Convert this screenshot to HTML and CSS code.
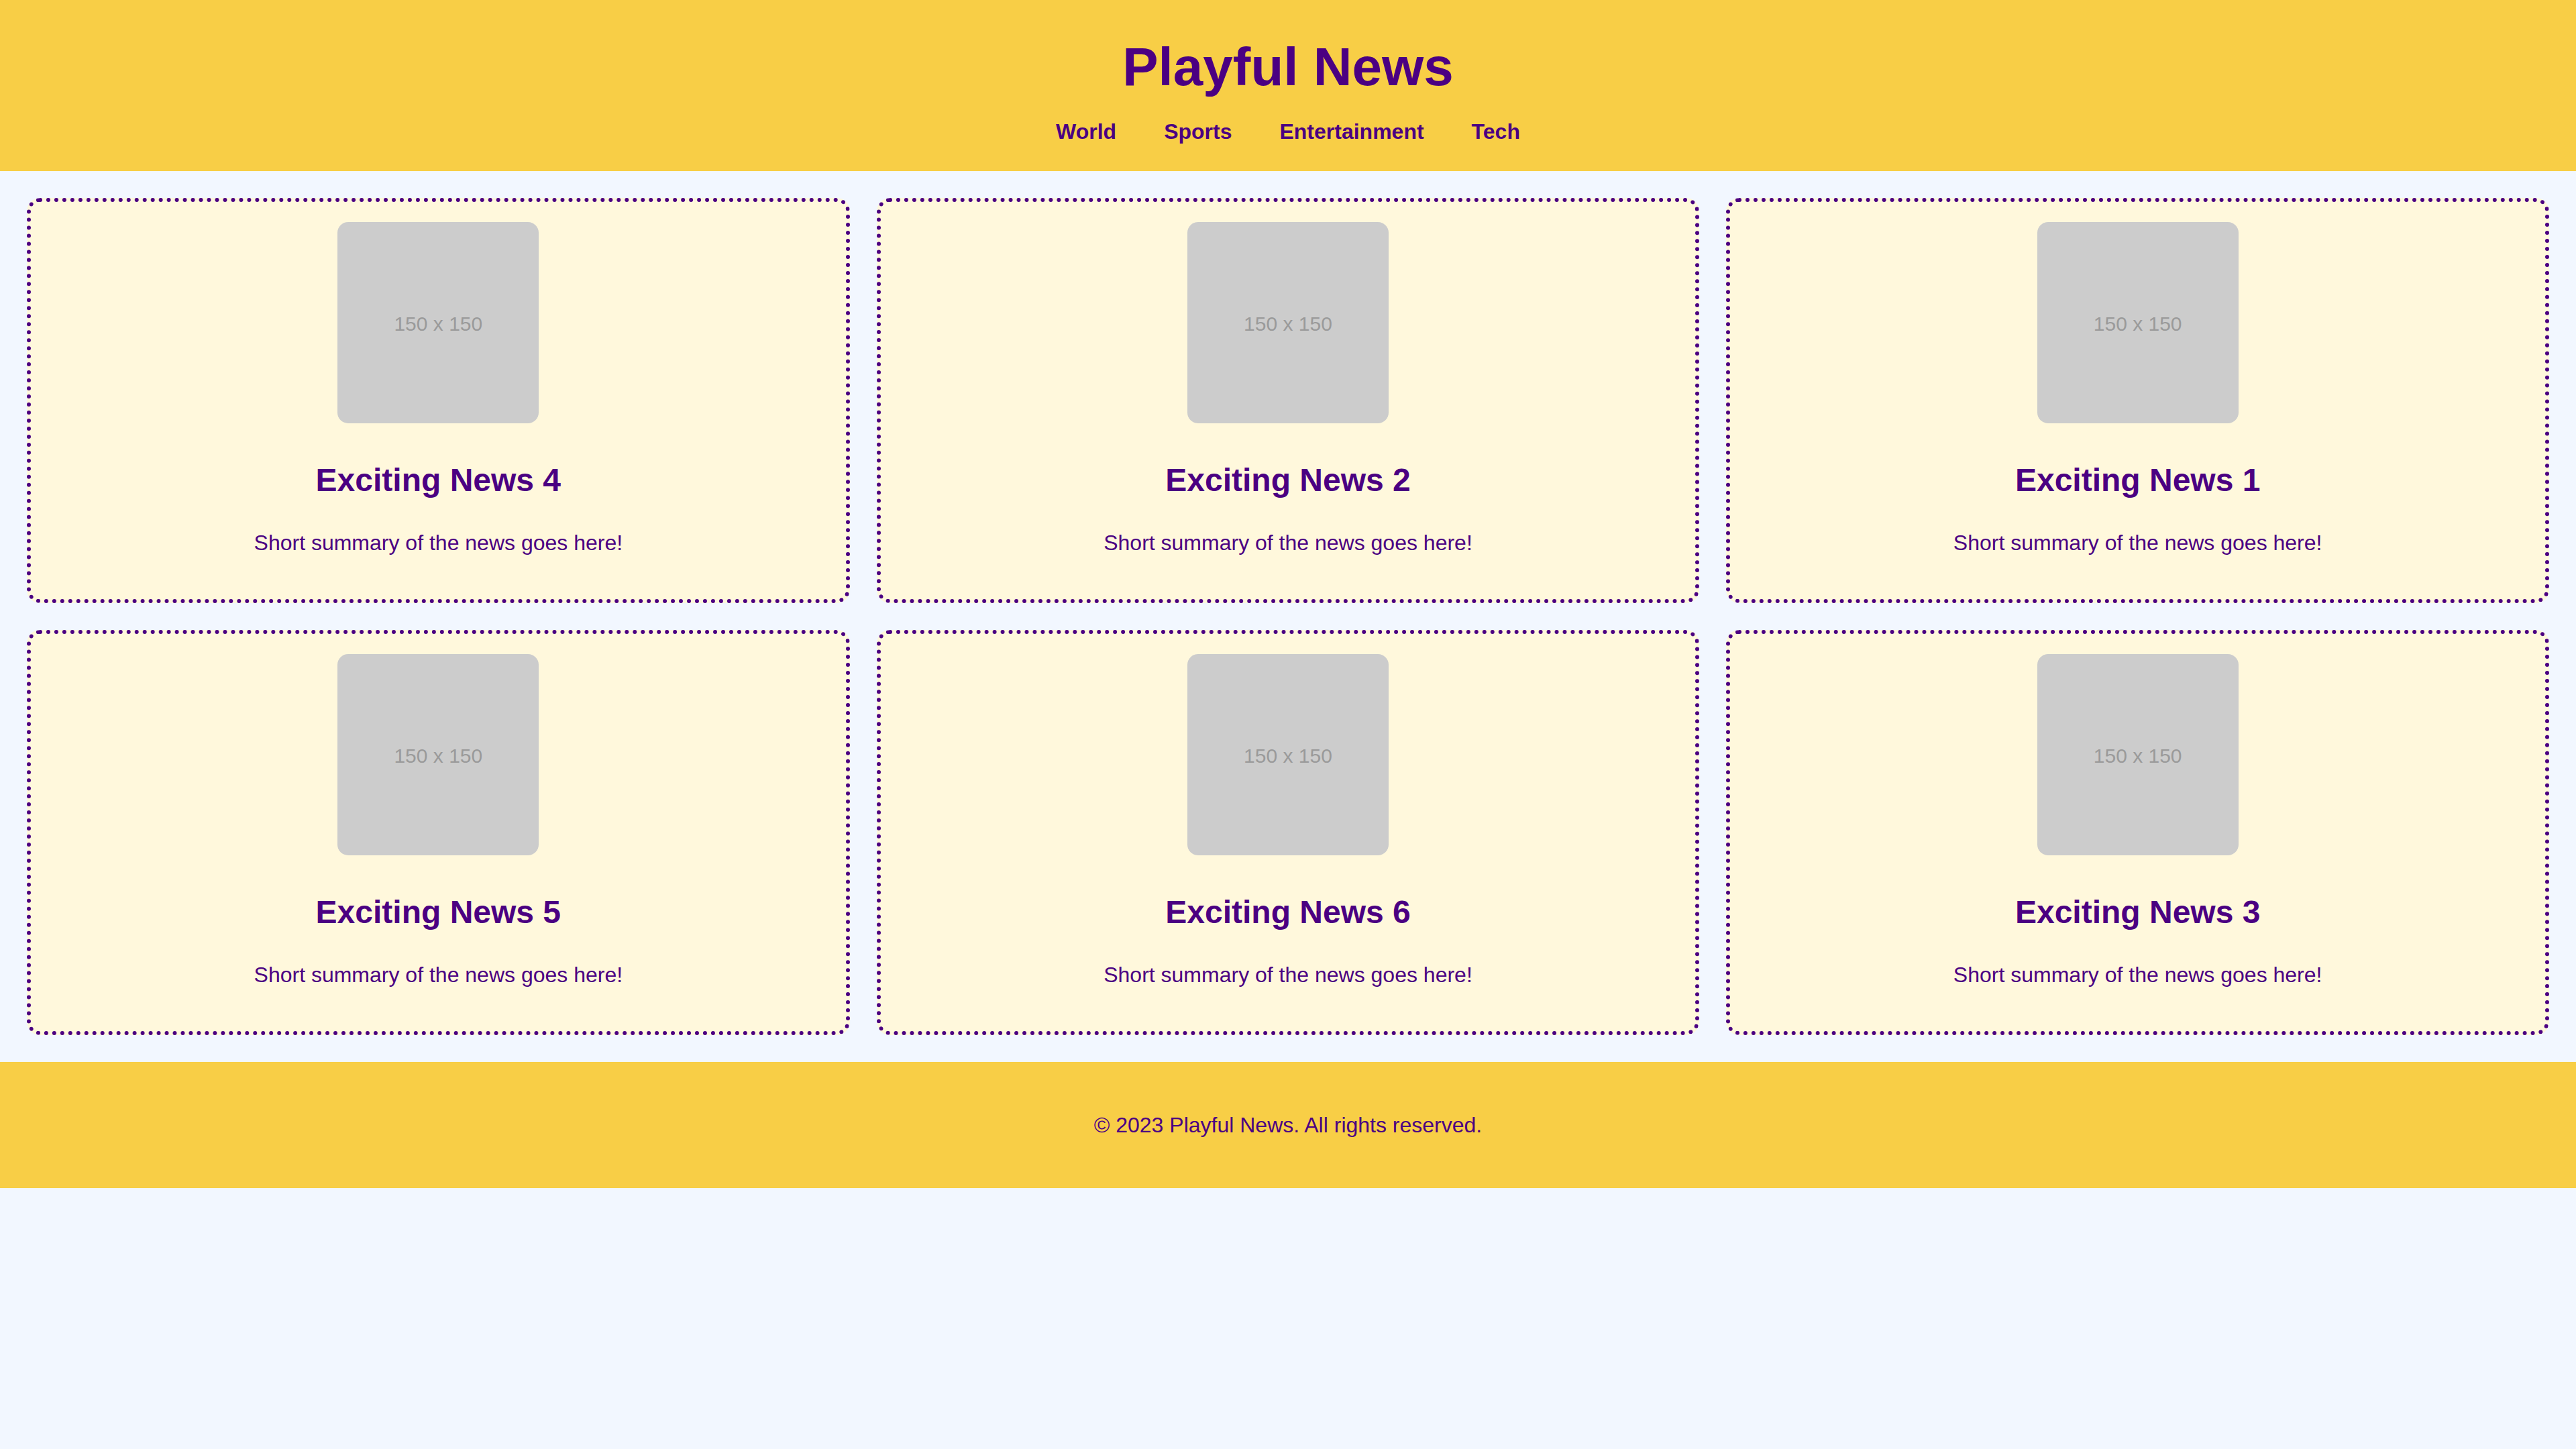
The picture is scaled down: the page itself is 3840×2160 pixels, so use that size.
FILE: index.html
```html
<!DOCTYPE html>
<html lang="en">
<head>
<meta charset="utf-8">
<title>Playful News</title>
<link rel="stylesheet" href="styles.css">
</head>
<body>
<header class="site-header">
  <h1 class="site-title">Playful News</h1>
  <nav class="site-nav">
    <a href="#">World</a>
    <a href="#">Sports</a>
    <a href="#">Entertainment</a>
    <a href="#">Tech</a>
  </nav>
</header>
<main class="news-grid">
  <article class="card">
    <div class="thumb">150 x 150</div>
    <h2 class="card-title">Exciting News 4</h2>
    <p class="card-text">Short summary of the news goes here!</p>
  </article>
  <article class="card">
    <div class="thumb">150 x 150</div>
    <h2 class="card-title">Exciting News 2</h2>
    <p class="card-text">Short summary of the news goes here!</p>
  </article>
  <article class="card">
    <div class="thumb">150 x 150</div>
    <h2 class="card-title">Exciting News 1</h2>
    <p class="card-text">Short summary of the news goes here!</p>
  </article>
  <article class="card">
    <div class="thumb">150 x 150</div>
    <h2 class="card-title">Exciting News 5</h2>
    <p class="card-text">Short summary of the news goes here!</p>
  </article>
  <article class="card">
    <div class="thumb">150 x 150</div>
    <h2 class="card-title">Exciting News 6</h2>
    <p class="card-text">Short summary of the news goes here!</p>
  </article>
  <article class="card">
    <div class="thumb">150 x 150</div>
    <h2 class="card-title">Exciting News 3</h2>
    <p class="card-text">Short summary of the news goes here!</p>
  </article>
</main>
<footer class="site-footer">
  <p class="footer-text">© 2023 Playful News. All rights reserved.</p>
</footer>
</body>
</html>
```

FILE: styles.css
```css
html {
  zoom: 2;
}

body {
  margin: 0;
  background: #f2f7ff;
  color: #4b0082;
  font-family: "Comic Sans MS", "Liberation Sans", sans-serif;
}

.site-header {
  background: #f8ce46;
  padding: 20px 0 18.5px;
  text-align: center;
}

.site-title {
  margin: 0;
  font-size: 40px;
  line-height: 60px;
  font-weight: bold;
}

.site-nav {
  margin-top: 7px;
  display: flex;
  justify-content: center;
  gap: 35.5px;
  line-height: 22px;
  font-size: 16px;
}

.site-nav a {
  color: #4b0082;
  text-decoration: none;
  font-weight: bold;
}

.news-grid {
  display: grid;
  grid-template-columns: repeat(3, 1fr);
  gap: 20px;
  padding: 20px;
}

.card {
  background: #fff8dc;
  border: 3px dotted #4b0082;
  border-radius: 10px;
  padding: 15px;
  text-align: center;
}

.thumb {
  width: 150px;
  height: 150px;
  box-sizing: border-box;
  padding-top: 2px;
  margin: 0 auto;
  background: #cccccc;
  border-radius: 8px;
  color: #9a9a9a;
  font-family: "Liberation Sans", Arial, sans-serif;
  font-size: 15px;
  display: flex;
  align-items: center;
  justify-content: center;
}

.card-title {
  margin: 26px 0 19px;
  font-size: 24px;
  line-height: 33px;
  font-weight: bold;
}

.card-text {
  margin: 0 0 16px;
  font-size: 16px;
  line-height: 22px;
}

.site-footer {
  background: #f8ce46;
  padding: 20px;
  text-align: center;
}

.footer-text {
  margin: 16px 0;
  font-size: 16px;
  line-height: 22px;
}
```
